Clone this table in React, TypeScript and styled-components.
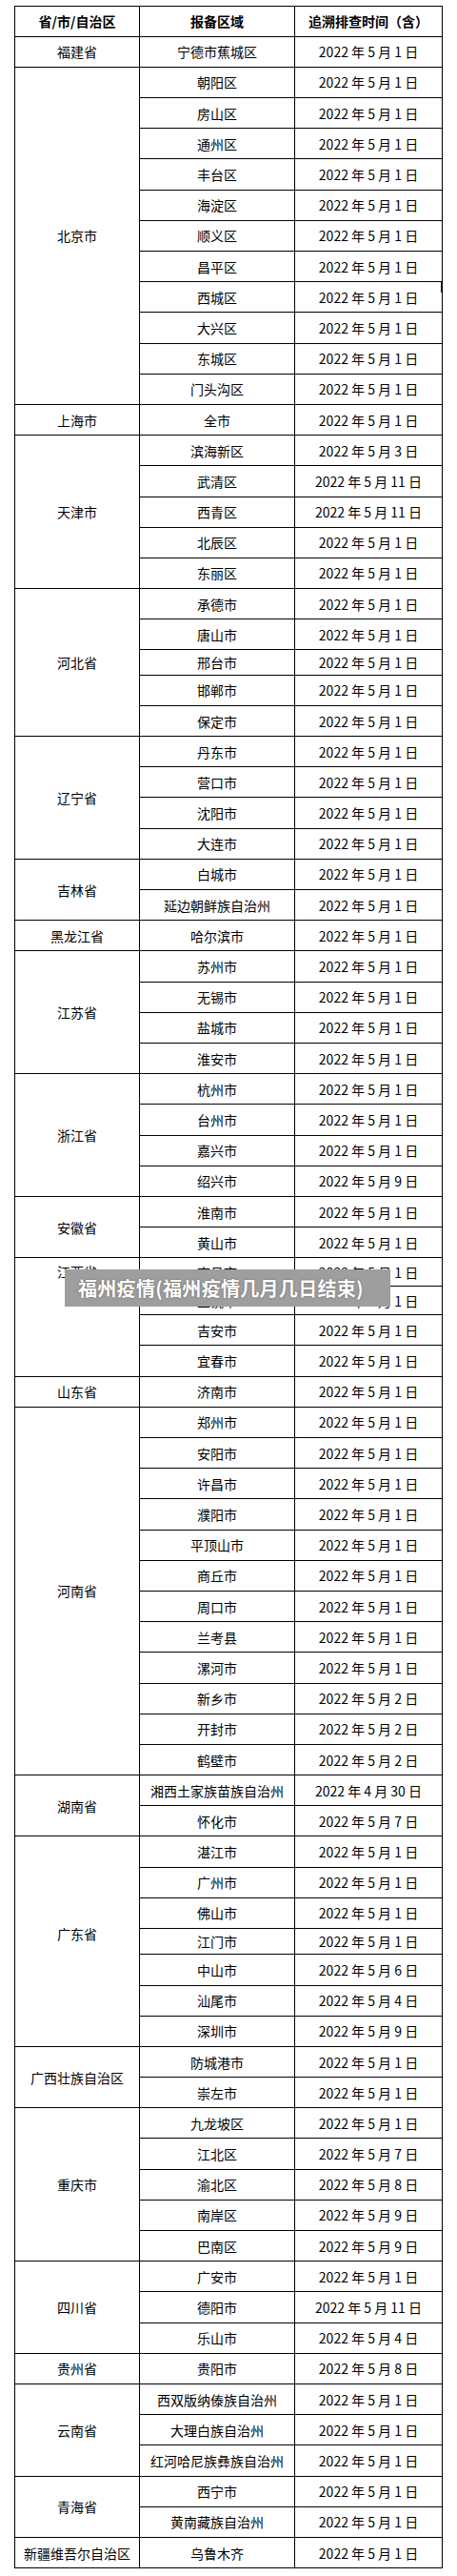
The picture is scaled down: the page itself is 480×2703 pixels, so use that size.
import React from "react";
import styled, { createGlobalStyle } from "styled-components";

const GlobalStyle = createGlobalStyle`
  html, body { margin: 0; padding: 0; background: #ffffff; }
  body { font-family: "Noto Sans CJK SC", "Noto Sans", sans-serif; color: #000; }
`;

type Item = { region: string; date: string; h?: number };
type Group = { province: string; items: Item[]; lift?: number };

const ROW_H = 32.19;

const it = (region: string, m: number, day: number, h?: number): Item => ({
  region,
  date: `2022 年 ${m} 月 ${day} 日`,
  h,
});

const groups: Group[] = [
  { province: "福建省", items: [it("宁德市蕉城区", 5, 1)] },
  {
    province: "北京市",
    items: [
      it("朝阳区", 5, 1),
      it("房山区", 5, 1),
      it("通州区", 5, 1),
      it("丰台区", 5, 1),
      it("海淀区", 5, 1),
      it("顺义区", 5, 1),
      it("昌平区", 5, 1),
      it("西城区", 5, 1),
      it("大兴区", 5, 1),
      it("东城区", 5, 1),
      it("门头沟区", 5, 1),
    ],
  },
  { province: "上海市", items: [it("全市", 5, 1)] },
  {
    province: "天津市",
    items: [
      it("滨海新区", 5, 3),
      it("武清区", 5, 11),
      it("西青区", 5, 11),
      it("北辰区", 5, 1),
      it("东丽区", 5, 1),
    ],
  },
  {
    province: "河北省",
    items: [
      it("承德市", 5, 1),
      it("唐山市", 5, 1),
      it("邢台市", 5, 1, 26.3),
      it("邯郸市", 5, 1),
      it("保定市", 5, 1),
    ],
  },
  {
    province: "辽宁省",
    items: [it("丹东市", 5, 1), it("营口市", 5, 1), it("沈阳市", 5, 1), it("大连市", 5, 1)],
  },
  { province: "吉林省", items: [it("白城市", 5, 1), it("延边朝鲜族自治州", 5, 1)] },
  { province: "黑龙江省", items: [it("哈尔滨市", 5, 1)] },
  {
    province: "江苏省",
    items: [it("苏州市", 5, 1), it("无锡市", 5, 1), it("盐城市", 5, 1), it("淮安市", 5, 1)],
  },
  {
    province: "浙江省",
    items: [it("杭州市", 5, 1), it("台州市", 5, 1), it("嘉兴市", 5, 1), it("绍兴市", 5, 9)],
  },
  { province: "安徽省", items: [it("淮南市", 5, 1), it("黄山市", 5, 1)] },
  {
    province: "江西省",
    lift: 95,
    items: [
      it("南昌市", 5, 1, 30),
      it("上饶市", 5, 1, 30),
      it("吉安市", 5, 1),
      it("宜春市", 5, 1),
    ],
  },
  { province: "山东省", items: [it("济南市", 5, 1)] },
  {
    province: "河南省",
    items: [
      it("郑州市", 5, 1),
      it("安阳市", 5, 1),
      it("许昌市", 5, 1),
      it("濮阳市", 5, 1),
      it("平顶山市", 5, 1),
      it("商丘市", 5, 1),
      it("周口市", 5, 1),
      it("兰考县", 5, 1),
      it("漯河市", 5, 1),
      it("新乡市", 5, 2),
      it("开封市", 5, 2),
      it("鹤壁市", 5, 2),
    ],
  },
  { province: "湖南省", items: [it("湘西土家族苗族自治州", 4, 30), it("怀化市", 5, 7)] },
  {
    province: "广东省",
    lift: 17,
    items: [
      it("湛江市", 5, 1),
      it("广州市", 5, 1),
      it("佛山市", 5, 1),
      it("江门市", 5, 1, 27.3),
      it("中山市", 5, 6),
      it("汕尾市", 5, 4),
      it("深圳市", 5, 9),
    ],
  },
  { province: "广西壮族自治区", items: [it("防城港市", 5, 1), it("崇左市", 5, 1)] },
  {
    province: "重庆市",
    items: [
      it("九龙坡区", 5, 1),
      it("江北区", 5, 7),
      it("渝北区", 5, 8),
      it("南岸区", 5, 9),
      it("巴南区", 5, 9),
    ],
  },
  { province: "四川省", items: [it("广安市", 5, 1), it("德阳市", 5, 11), it("乐山市", 5, 4)] },
  { province: "贵州省", items: [it("贵阳市", 5, 8)] },
  {
    province: "云南省",
    items: [
      it("西双版纳傣族自治州", 5, 1),
      it("大理白族自治州", 5, 1),
      it("红河哈尼族彝族自治州", 5, 1),
    ],
  },
  { province: "青海省", items: [it("西宁市", 5, 1), it("黄南藏族自治州", 5, 1)] },
  { province: "新疆维吾尔自治区", items: [it("乌鲁木齐", 5, 1)] },
];

const Page = styled.div`
  position: relative;
  width: 480px;
  height: 2703px;
  box-sizing: border-box;
  padding: 6px 0 0 15px;
  display: flex;
  flex-direction: column;
  align-items: flex-start;
  overflow: hidden;
  background: #fff;
`;

const Table = styled.table`
  width: 449px;
  table-layout: fixed;
  border-collapse: collapse;
  border: 1px solid #000;
  font-family: "Noto Sans CJK SC", "Noto Sans", sans-serif;
  font-size: 14px;
  color: #000;
`;

const Row = styled.tr<{ $h: number }>`
  height: ${(p) => p.$h}px;
`;

const HeadCell = styled.th`
  border: 1px solid #000;
  padding: 0;
  font-weight: 700;
  text-align: center;
  vertical-align: middle;
  line-height: 1;
  white-space: nowrap;
`;

const Cell = styled.td`
  border: 1px solid #000;
  padding: 0;
  font-weight: 400;
  text-align: center;
  vertical-align: middle;
  line-height: 1;
  white-space: nowrap;
`;

const ProvinceCell = styled(Cell)<{ $lift: number }>`
  padding-bottom: ${(p) => p.$lift}px;
`;

const Banner = styled.div`
  position: absolute;
  left: 68px;
  top: 1332px;
  width: 342px;
  height: 39px;
  box-sizing: border-box;
  padding-left: 14px;
  display: flex;
  align-items: center;
  background: #9e9e9e;
  color: #ffffff;
  font-family: "Noto Sans CJK SC", "Noto Sans", sans-serif;
  font-weight: 700;
  font-size: 20px;
  letter-spacing: 0.3px;
  text-shadow: 0 0 2px rgba(60, 60, 60, 0.7);
  white-space: nowrap;
`;

const EdgeMark = styled.span`
  position: absolute;
  left: 463px;
  top: 296px;
  width: 2px;
  height: 11px;
  background: #000;
`;

export default function App() {
  return (
    <>
      <GlobalStyle />
      <Page>
        <Table>
          <colgroup>
            <col style={{ width: 131 }} />
            <col style={{ width: 163 }} />
            <col style={{ width: 155 }} />
          </colgroup>
          <thead>
            <Row $h={31.7}>
              <HeadCell>省/市/自治区</HeadCell>
              <HeadCell>报备区域</HeadCell>
              <HeadCell>追溯排查时间（含）</HeadCell>
            </Row>
          </thead>
          <tbody>
            {groups.map((g) =>
              g.items.map((item, i) => (
                <Row $h={item.h ?? ROW_H} key={g.province + item.region}>
                  {i === 0 && (
                    <ProvinceCell rowSpan={g.items.length} $lift={g.lift ?? 0}>
                      {g.province}
                    </ProvinceCell>
                  )}
                  <Cell>{item.region}</Cell>
                  <Cell>{item.date}</Cell>
                </Row>
              ))
            )}
          </tbody>
        </Table>
        <EdgeMark />
        <Banner>福州疫情(福州疫情几月几日结束)</Banner>
      </Page>
    </>
  );
}
